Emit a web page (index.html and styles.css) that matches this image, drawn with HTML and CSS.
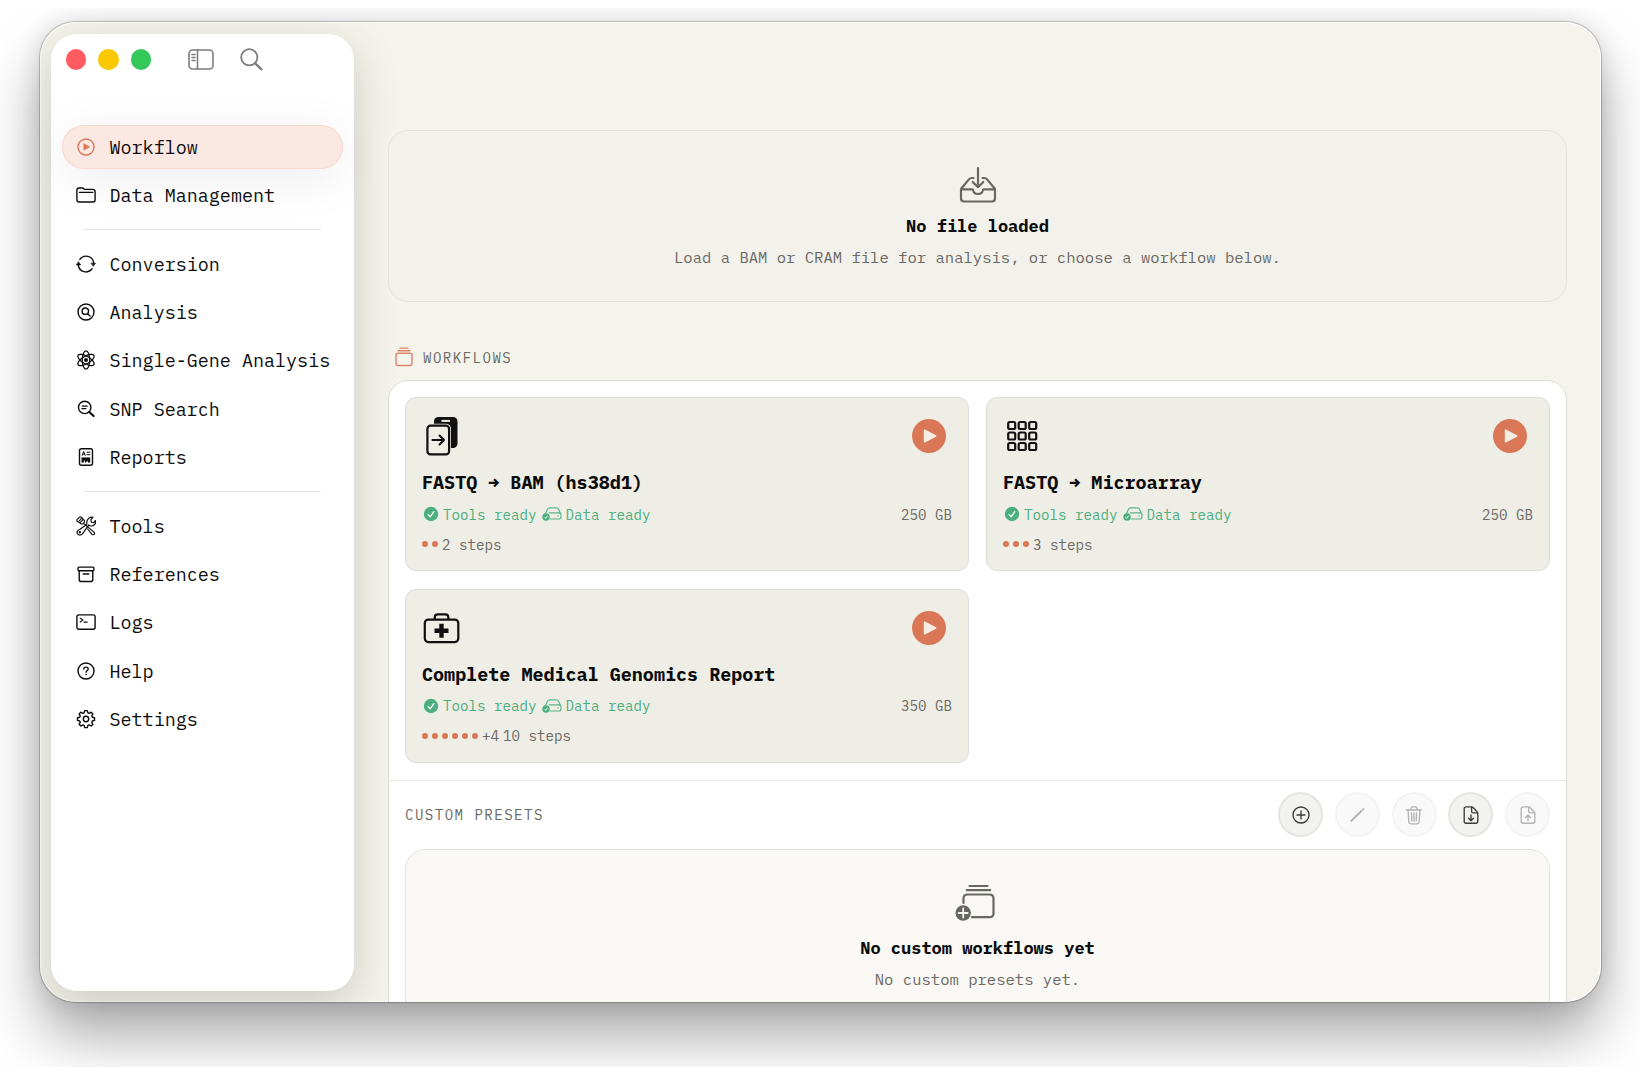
FILE: index.html
```html
<!DOCTYPE html>
<html lang="en">
<head>
    <meta charset="UTF-8">
    <meta name="viewport" content="width=device-width, initial-scale=1.0">
    <title>Workflow</title>
    <link rel="stylesheet" href="styles.css">
</head>
<body>
    <!-- shared icons -->
    <svg class="defs" aria-hidden="true">
        <symbol id="i-play" viewBox="0 0 34 34">
            <circle cx="17" cy="17" r="17" fill="#d97757"/>
            <path d="M12.600 11.200v11.600l11-5.800z" fill="#f4ede4" stroke="#f4ede4" stroke-width="1.600" stroke-linejoin="round"/>
        </symbol>
        <symbol id="i-check" viewBox="0 0 16 16">
            <circle cx="8" cy="8" r="7.200" fill="#4caf80"/>
            <path d="M5.200 8.600l2 2.200 3.600-5.200" fill="none" stroke="#fff" stroke-width="1.300" stroke-linecap="round" stroke-linejoin="round"/>
        </symbol>
        <symbol id="i-drive" viewBox="0 0 20 14">
            <path d="M3.600 6.400l1.800-4.200Q6 .8 7.600.8h6.600q1.600 0 2.300 1.400l2.100 4.500M7.300 5.900h9.400q2.300 0 2.300 2.300v1.500q0 2.300-2.300 2.300H8" fill="none" stroke="#5db58b" stroke-width="1.200" stroke-linecap="round"/>
            <circle cx="16" cy="9" r=".7" fill="#5db58b"/>
            <circle cx="4" cy="10" r="3.700" fill="#4caf80"/>
            <path d="M2.500 10.200l1.100 1.200 1.900-2.700" fill="none" stroke="#fff" stroke-width=".9"/>
        </symbol>
    </svg>

    <div class="desktop">
        <div class="window">
            <aside class="sidebar">
                <div class="titlebar">
                    <span class="light red"></span>
                    <span class="light yellow"></span>
                    <span class="light green"></span>
                    <svg class="tb-icon toggle" viewBox="0 0 26 21"><rect x="1" y="1" width="24" height="19" rx="3.500"/><path d="M9.500 1v19M4 5.500h3M4 8.500h3M4 11.500h3"/></svg>
                    <svg class="tb-icon" viewBox="0 0 23 23"><circle cx="9.300" cy="9.300" r="8.100"/><path d="M15.300 15.300l6.200 6" stroke-width="2.300"/></svg>
                </div>

                <nav class="nav">
                    <a class="item active">
                        <svg viewBox="0 0 20 20"><circle cx="10" cy="10" r="8"/><path d="M7.900 7v6l5.400-3z" fill="currentColor" stroke-width=".8"/></svg>
                        <span>Workflow</span>
                    </a>
                    <a class="item">
                        <svg viewBox="0 0 20 20"><path d="M.9 5.200q0-2.200 2.200-2.200h3.200q.9 0 1.500.7l.7.700h8.300q2.300 0 2.300 2.300v8q0 2.300-2.300 2.300H3.200q-2.300 0-2.300-2.300zM3.500 7.400h13.200"/></svg>
                        <span>Data Management</span>
                    </a>
                    <hr>
                    <a class="item">
                        <svg viewBox="0 0 20 20"><path d="M3.800 5.400a7.700 7.700 0 0 1 13.900 3.600M16.200 14.700a7.700 7.700 0 0 1-13.900-3.600"/><path d="M15.300 9.200h4.200l-2.100 2.900zM.5 10.900h4.200L2.600 8z" fill="currentColor" stroke-width=".6"/></svg>
                        <span>Conversion</span>
                    </a>
                    <a class="item">
                        <svg viewBox="0 0 20 20"><circle cx="10" cy="10" r="8"/><circle cx="9.300" cy="9.200" r="3.200"/><path d="M11.700 11.700l2.400 2.400"/></svg>
                        <span>Analysis</span>
                    </a>
                    <a class="item">
                        <svg viewBox="0 0 20 20"><g stroke-width="1.250"><ellipse cx="10" cy="10" rx="3.700" ry="9.200"/><ellipse cx="10" cy="10" rx="3.700" ry="9.200" transform="rotate(60 10 10)"/><ellipse cx="10" cy="10" rx="3.700" ry="9.200" transform="rotate(-60 10 10)"/></g><circle cx="10" cy="10" r="1.300" fill="currentColor"/></svg>
                        <span>Single-Gene Analysis</span>
                    </a>
                    <a class="item">
                        <svg viewBox="0 0 20 20"><circle cx="8.700" cy="8.400" r="6.200"/><path d="M13.300 12.900l4.300 4.200" stroke-width="2.100"/><path d="M6.200 7.200h5M5.900 9.700h4" stroke-width="1.200"/></svg>
                        <span>SNP Search</span>
                    </a>
                    <a class="item">
                        <svg viewBox="0 0 20 20"><rect x="3.500" y="1.700" width="13" height="16.600" rx="2"/><path d="M6.200 8.300l1.500-3.800 1.500 3.800M6.700 7.200h2M11 5.200h3M11 7.700h3" stroke-width="1"/><path d="M6 10.700h8v4.600h-1.600l-1.200-1.900-1.200 1.900h-.9v-2H7.600v2H6z" fill="currentColor" stroke-width=".5"/></svg>
                        <span>Reports</span>
                    </a>
                    <hr>
                    <a class="item">
                        <svg viewBox="0 0 20 20"><g stroke-width="1.150"><path d="M1 3.700L3.600 1.100q1.100-.6 2 .3l2.600 3q.8 1.200-.2 2.200L6.800 7.800q-1.100.7-2-.2L1.100 5.200q-.5-.8-.1-1.500zM8.200 7.900l10 8.500q.8 1.200-.2 2-1.100.8-2-.1L11.700 13M3.200 4.800l2.200-2.200M4.600 6.100l2.200-2.200"/><path d="M12.800 8.900l-6.400 9q-1.800 1.800-3.900.9-2-1.400-1.200-3.500.7-1.300 2.800-2l6.800-5.100q-.7-4 2.200-6.200 1.800-1.200 3.800-.7l-2.100 2.600.7 2.400 2.300.5 1.500-2.300q.9 2.600-1 4.300-2 1.700-4.300.9z"/></g><circle cx="3.800" cy="16.300" r=".5"/></svg>
                        <span>Tools</span>
                    </a>
                    <a class="item">
                        <svg viewBox="0 0 20 20"><rect x="2.100" y="3.100" width="15.800" height="3.600" rx="1"/><path d="M3.200 6.700v8.700q0 2.100 2.100 2.100h9.400q2.100 0 2.100-2.100V6.700M7.200 10h5.600"/></svg>
                        <span>References</span>
                    </a>
                    <a class="item">
                        <svg viewBox="0 0 20 20"><rect x=".9" y="2.900" width="18.200" height="14.400" rx="2"/><path d="M4.200 6.300l2.700 1.800-2.700 1.800M8 10.100h3.200" stroke-width="1.200"/></svg>
                        <span>Logs</span>
                    </a>
                    <a class="item">
                        <svg viewBox="0 0 20 20"><circle cx="10" cy="10" r="8"/><path d="M7.800 8.100q0-2 2.200-2t2.200 1.800q0 1-1.200 1.700-.9.600-.9 1.700"/><circle cx="10.100" cy="13.600" r=".45" fill="currentColor" stroke-width=".7"/></svg>
                        <span>Help</span>
                    </a>
                    <a class="item">
                        <svg viewBox="0 0 20 20"><path d="M8.700 1.600h2.600l.6 2.200 1.300.5 2-1.100 1.700 1.700-1.100 2 .5 1.300 2.200.6v2.600l-2.200.6-.5 1.300 1.100 2-1.700 1.700-2-1.100-1.300.5-.6 2.200H8.700l-.6-2.200-1.300-.5-2 1.100-1.700-1.700 1.100-2-.5-1.300-2.200-.6V8.800l2.200-.6.5-1.300-1.100-2 1.700-1.700 2 1.100 1.300-.5z"/><circle cx="10" cy="10" r="2.700"/></svg>
                        <span>Settings</span>
                    </a>
                </nav>
            </aside>

            <main class="content">
                <section class="empty hero">
                    <svg class="hero-icon" viewBox="0 0 38 36"><path d="M14.500 11h-1.700q-1.800 0-2.900 1.400L2.700 21q-.7.900-.7 2v8.500q0 3 3 3h28q3 0 3-3V23q0-1.100-.7-2l-7.200-8.600Q27 11 25.200 11h-1.700M2 22.300h11q1.200 0 1.300 1.400.5 3.300 4.700 3.300t4.700-3.300q.1-1.400 1.300-1.400h11M19 1.200v18.500M13.700 15l5.300 5.300 5.300-5.300"/></svg>
                    <h2>No file loaded</h2>
                    <p>Load a BAM or CRAM file for analysis, or choose a workflow below.</p>
                </section>

                <div class="section-label">
                    <svg viewBox="0 0 18 20"><rect x="1" y="6.200" width="16" height="12.300" rx="2"/><path d="M3.200 3.700h11.600M5 1.100h8"/></svg>
                    <span>WORKFLOWS</span>
                </div>

                <section class="panel">
                    <div class="cards">
                        <article class="card">
                            <div class="card-top">
                                <svg class="card-icon" viewBox="0 0 38 44"><rect x="12" y="3" width="23.500" height="31" rx="4.500" fill="#111"/><path d="M19.500 6.900h8.500" stroke="#eeede6" stroke-width="2"/><rect x="3.500" y="9.800" width="25.500" height="32.500" rx="5" fill="#eeede6"/><rect x="5.400" y="11.700" width="21.700" height="28.700" rx="3.200" fill="#eeede6" stroke="#111" stroke-width="2.200"/><path d="M10.500 26h11.500M17.500 21.500l4.500 4.500-4.500 4.500" fill="none" stroke="#111" stroke-width="2" stroke-linecap="round" stroke-linejoin="round"/></svg>
                                <svg class="play"><use href="#i-play"/></svg>
                            </div>
                            <h3>FASTQ → BAM (hs38d1)</h3>
                            <div class="status">
                                <svg class="check"><use href="#i-check"/></svg><span>Tools ready</span>
                                <svg class="drive"><use href="#i-drive"/></svg><span>Data ready</span>
                                <span class="size">250 GB</span>
                            </div>
                            <div class="steps"><i></i><i></i><span>2 steps</span></div>
                        </article>

                        <article class="card">
                            <div class="card-top">
                                <svg class="card-icon" viewBox="0 0 38 44"><g fill="none" stroke="#111" stroke-width="2.200"><rect x="5.200" y="8" width="7" height="7" rx="1.600"/><rect x="15.700" y="8" width="7" height="7" rx="1.600"/><rect x="26.200" y="8" width="7" height="7" rx="1.600"/><rect x="5.200" y="18.500" width="7" height="7" rx="1.600"/><rect x="15.700" y="18.500" width="7" height="7" rx="1.600"/><rect x="26.200" y="18.500" width="7" height="7" rx="1.600"/><rect x="5.200" y="29" width="7" height="7" rx="1.600"/><rect x="15.700" y="29" width="7" height="7" rx="1.600"/><rect x="26.200" y="29" width="7" height="7" rx="1.600"/></g></svg>
                                <svg class="play"><use href="#i-play"/></svg>
                            </div>
                            <h3>FASTQ → Microarray</h3>
                            <div class="status">
                                <svg class="check"><use href="#i-check"/></svg><span>Tools ready</span>
                                <svg class="drive"><use href="#i-drive"/></svg><span>Data ready</span>
                                <span class="size">250 GB</span>
                            </div>
                            <div class="steps"><i></i><i></i><i></i><span>3 steps</span></div>
                        </article>

                        <article class="card">
                            <div class="card-top">
                                <svg class="card-icon" viewBox="0 0 38 44"><g fill="none" stroke="#111" stroke-width="2.200"><rect x="2.800" y="13.600" width="33.500" height="22.500" rx="3.500"/><path d="M12.800 13.500v-2.200q0-2.900 2.900-2.900h7.700q2.900 0 2.900 2.900v2.200"/></g><path d="M19.500 20v9.600M14.700 24.800h9.600" stroke="#111" stroke-width="4.400" stroke-linecap="square"/></svg>
                                <svg class="play"><use href="#i-play"/></svg>
                            </div>
                            <h3>Complete Medical Genomics Report</h3>
                            <div class="status">
                                <svg class="check"><use href="#i-check"/></svg><span>Tools ready</span>
                                <svg class="drive"><use href="#i-drive"/></svg><span>Data ready</span>
                                <span class="size">350 GB</span>
                            </div>
                            <div class="steps"><i></i><i></i><i></i><i></i><i></i><i></i><span>+4</span><span>10 steps</span></div>
                        </article>
                    </div>

                    <div class="presets">
                        <div class="presets-head">
                            <span class="presets-title">CUSTOM PRESETS</span>
                            <button class="round"><svg viewBox="0 0 20 20"><circle cx="10" cy="10" r="8"/><path d="M10 6v8M6 10h8"/></svg></button>
                            <button class="round" disabled><svg viewBox="0 0 20 20"><path d="M4.300 15.900L14.600 5.800M16.200 4.300l.3-.3" stroke-width="2"/></svg></button>
                            <button class="round" disabled><svg viewBox="0 0 20 20"><path d="M2.500 5h15M4 5l.9 12q.1 1.800 1.900 1.800h6.400q1.800 0 1.900-1.800L16 5M7 4.700V3.500q0-1.600 1.600-1.600h2.800q1.600 0 1.600 1.600v1.200M7.500 8l.3 8M10 8v8M12.500 8l-.3 8"/></svg></button>
                            <button class="round"><svg viewBox="0 0 20 20"><path d="M5.200 1.800h5.200q1 0 1.700.7l4 4.200q.7.700.7 1.700v7.800q0 2-2 2H5.200q-2 0-2-2V3.800q0-2 2-2zM10.600 2v4.300q0 1.600 1.600 1.600h4.300M10 9.800v5.700M7.500 13.200l2.500 2.500 2.500-2.500"/></svg></button>
                            <button class="round" disabled><svg viewBox="0 0 20 20"><path d="M5.200 1.800h5.200q1 0 1.700.7l4 4.200q.7.700.7 1.700v7.800q0 2-2 2H5.200q-2 0-2-2V3.800q0-2 2-2zM10.600 2v4.300q0 1.600 1.600 1.600h4.300M10 15.800v-5.500M7.500 12.600l2.500-2.500 2.500 2.500"/></svg></button>
                        </div>

                        <div class="empty presets-empty">
                            <svg class="stack-icon" viewBox="0 0 40 38"><path d="M8.500 19v-4.500q0-4 4-4h22q4 0 4 4v14.700q0 4-4 4H17M11.800 6.200h23.400M14.500 2h18" fill="none" stroke="#686863" stroke-width="2.200" stroke-linecap="round"/><circle cx="8.200" cy="29" r="7.700" fill="#686863"/><path d="M8.200 24.500v9M3.700 29h9" stroke="#f9f8f4" stroke-width="1.800" stroke-linecap="round"/></svg>
                            <h2>No custom workflows yet</h2>
                            <p>No custom presets yet.</p>
                        </div>
                    </div>
                </section>
            </main>
        </div>
    </div>
</body>
</html>
```
FILE: styles.css
```css
* { box-sizing: border-box; }
body {
    margin: 0;
    background: #fff;
    color: #0c0c0c;
    font-family: "IBM Plex Mono", "Liberation Mono", monospace;
    overflow: hidden;
}
h2, h3, p { margin: 0; }
.defs { display: none; }

/* the window shadow is cut off by the desktop area */
.desktop {
    margin: 8px 0;
    height: 1059px;
    padding: 14px 39px 0 39.5px;
    overflow: hidden;
}
.window {
    display: flex;
    height: 980px;
    padding-left: 11px;
    border-radius: 36px;
    overflow: hidden;
    background: #f5f4ec;
    box-shadow:
        inset 0 0 0 1px rgba(255, 255, 255, 0.8),
        0 0 1px 0.5px rgba(0, 0, 0, 0.22),
        0 0 24px rgba(0, 0, 0, 0.12),
        0 34px 58px rgba(0, 0, 0, 0.34);
}

/* sidebar */
.sidebar {
    width: 303.5px;
    height: 957px;
    margin-top: 12px;
    flex: none;
    padding: 0 11px;
    border-radius: 26px;
    background: #fff;
    box-shadow: 0 14px 44px rgba(60, 60, 50, 0.22);
}
.titlebar {
    display: flex;
    align-items: center;
    height: 51px;
    padding-left: 4px;
    gap: 12px;
}
.light {
    width: 20.5px;
    height: 20.5px;
    border-radius: 50%;
}
.red { background: #ff5b60; }
.yellow { background: #fac800; }
.green { background: #34c759; }
.tb-icon {
    width: 23px;
    height: 23px;
    fill: none;
    stroke: #7c7c7c;
    stroke-width: 1.8;
    stroke-linecap: round;
}
.toggle {
    width: 26px;
    height: 21px;
    margin: 0 14px 0 24.5px;
    stroke-width: 1.6;
}
.nav { margin-top: 39.5px; }
.item {
    display: flex;
    align-items: center;
    height: 44px;
    margin-bottom: 4.25px;
    padding-left: 14px;
    gap: 14px;
    font-size: 18.4px;
    white-space: nowrap;
    border-radius: 23px;
}
.item svg {
    width: 20px;
    height: 20px;
    flex: none;
    fill: none;
    stroke: currentColor;
    stroke-width: 1.4;
    stroke-linecap: round;
    stroke-linejoin: round;
}
.item.active {
    background: #fbe8e2;
    box-shadow: inset 0 0 0 1px #f8d8ce, 0 10px 50px rgba(0, 0, 0, 0.08);
}
.item.active svg { color: #d97757; }
.nav hr {
    height: 1px;
    margin: 12px 22px 12px;
    border: 0;
    background: #e5e5e1;
}

/* content */
.content {
    flex: 1;
    min-width: 0;
    padding: 108px 34px 0;
}
.empty {
    display: flex;
    flex-direction: column;
    align-items: center;
    border: 1px solid #e4e3db;
    border-radius: 20px;
}
.empty h2 {
    font-size: 17px;
    line-height: 24px;
}
.empty p {
    margin-top: 8px;
    font-size: 15.57px;
    line-height: 22px;
    color: #6b6a65;
}
.hero {
    height: 172px;
    padding-top: 36px;
    background: #f2f1eb;
}
.hero-icon {
    width: 38px;
    height: 36px;
    margin-bottom: 11px;
    fill: none;
    stroke: #686863;
    stroke-width: 2.2;
    stroke-linecap: round;
    stroke-linejoin: round;
}
.section-label {
    display: flex;
    align-items: center;
    height: 24px;
    margin: 43px 0 11px 7px;
    gap: 10px;
    font-size: 14.15px;
    letter-spacing: 1.43px;
    color: #6b6a65;
}
.section-label svg {
    width: 18px;
    height: 20px;
    fill: none;
    stroke: #df8266;
    stroke-width: 1.4;
    stroke-linecap: round;
}
.panel {
    height: 700px;
    border: 1px solid #dddcd5;
    border-radius: 20px;
    background: #fff;
}
.cards {
    display: grid;
    grid-template-columns: 1fr 1fr;
    grid-auto-rows: 174px;
    gap: 17.5px 17px;
    padding: 16px 16px 17.5px;
}
.card {
    padding: 16px 16px 0;
    border: 1px solid #dddcd4;
    border-radius: 11px;
    background: #eeede6;
}
.card-top {
    display: flex;
    align-items: center;
    justify-content: space-between;
    height: 44px;
}
.card-icon {
    width: 38px;
    height: 44px;
}
.play {
    width: 34px;
    height: 34px;
    margin-right: 6px;
}
.card h3 {
    margin-top: 11px;
    font-size: 18.42px;
    line-height: 26px;
}
.status {
    display: flex;
    align-items: center;
    height: 22px;
    margin-top: 8px;
    font-size: 14.18px;
    color: #4caf80;
}
.check {
    width: 16px;
    height: 16px;
    margin: 0 4.5px 0 0.5px;
}
.drive {
    width: 20px;
    height: 14px;
    margin: 0 4px 0 5px;
}
.size {
    margin-left: auto;
    color: #6b6a65;
}
.steps {
    display: flex;
    align-items: center;
    height: 22px;
    margin-top: 8px;
    gap: 4px;
    font-size: 14.18px;
    color: #6b6a65;
}
.steps i {
    width: 6px;
    height: 6px;
    border-radius: 50%;
    background: #d97757;
}

/* custom presets */
.presets {
    padding: 0 16px;
    border-top: 1px solid #e8e7e2;
}
.presets-head {
    display: flex;
    align-items: center;
    height: 67px;
    margin-bottom: 0.5px;
    gap: 11.7px;
}
.presets-title {
    margin-right: auto;
    font-size: 14.15px;
    letter-spacing: 1.43px;
    color: #6b6a65;
}
.round {
    display: grid;
    place-items: center;
    width: 45px;
    height: 45px;
    padding: 0;
    border: 2px solid #e6e5e1;
    border-radius: 50%;
    background: #f2f2f1;
    color: #3c3c3c;
}
.round svg {
    width: 20px;
    height: 20px;
    fill: none;
    stroke: currentColor;
    stroke-width: 1.35;
    stroke-linecap: round;
    stroke-linejoin: round;
}
.round:disabled {
    border-color: #f3f3f1;
    background: #f9f9f9;
    color: #b2b2b2;
}
.presets-empty {
    height: 220px;
    padding-top: 34.5px;
    background: #f9f8f4;
}
.stack-icon {
    width: 40px;
    height: 38px;
    margin: 0 6px 14px 0;
}
```
